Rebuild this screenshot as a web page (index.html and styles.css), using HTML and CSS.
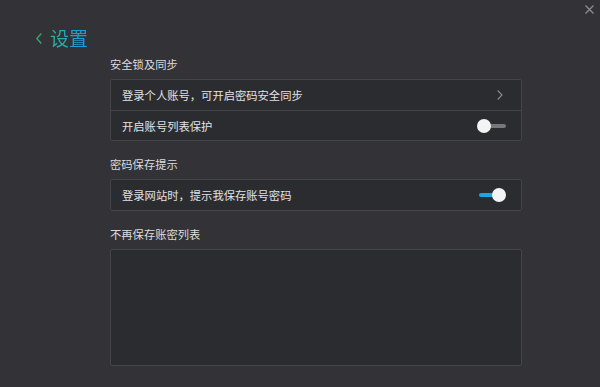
FILE: index.html
```html
<!DOCTYPE html>
<html lang="zh-CN">
<head>
    <meta charset="UTF-8">
    <title>设置</title>
    <link rel="stylesheet" href="styles.css">
</head>
<body>
    <!-- 关闭按钮 -->
    <span class="close-btn">
        <svg width="9" height="9" viewBox="0 0 9 9"><path d="M0.5 0.5 L8.5 8.5 M8.5 0.5 L0.5 8.5" stroke="#8c8c91" stroke-width="1.3" fill="none"/></svg>
    </span>

    <div class="page">
        <!-- 标题 -->
        <div class="header">
            <svg class="back" width="6" height="11" viewBox="0 0 6 11"><polyline points="5.3,0.5 0.8,5.5 5.3,10.5" stroke="#3aa878" stroke-width="1.3" fill="none"/></svg>
            <span class="title">设置</span>
        </div>

        <div class="content">
            <div class="section-label">安全锁及同步</div>
            <div class="panel">
                <div class="row">
                    <span>登录个人账号，可开启密码安全同步</span>
                    <svg class="arrow" width="6" height="10" viewBox="0 0 6 10"><polyline points="0.7,0.5 5,5 0.7,9.5" stroke="#8a8a8f" stroke-width="1.1" fill="none"/></svg>
                </div>
                <div class="row">
                    <span>开启账号列表保护</span>
                    <span class="toggle"><span class="track"></span><span class="knob"></span></span>
                </div>
            </div>

            <div class="section-label">密码保存提示</div>
            <div class="panel">
                <div class="row">
                    <span>登录网站时，提示我保存账号密码</span>
                    <span class="toggle on"><span class="track"></span><span class="knob"></span></span>
                </div>
            </div>

            <div class="section-label">不再保存账密列表</div>
            <div class="panel list-box"></div>
        </div>
    </div>
</body>
</html>
```

FILE: styles.css
```css
/* 基础 */
body {
    margin: 0;
    padding: 0;
    background: #333237;
    font-family: "Noto Sans CJK SC", "Noto Sans", sans-serif;
    color: #e2e2e4;
    overflow: hidden;
}

.close-btn {
    position: absolute;
    top: 5px;
    right: 6px;
    width: 9px;
    height: 9px;
    display: block;
    line-height: 0;
}

.page {
    padding-top: 28px;
}

/* 标题 */
.header {
    display: flex;
    align-items: center;
    height: 20px;
    padding-left: 36px;
}

.back {
    margin-right: 8px;
}

.title {
    font-size: 19px;
    line-height: 20px;
    background: linear-gradient(90deg, #2ab59a, #1b97e4);
    -webkit-background-clip: text;
    background-clip: text;
    color: transparent;
}

/* 内容 */
.content {
    margin-left: 110px;
    width: 412px;
    padding-top: 6px;
}

.section-label {
    font-size: 11.3px;
    line-height: 20px;
    height: 20px;
    color: #dcdcde;
    margin-bottom: 5px;
}

.panel {
    background: #2b2c30;
    border: 1px solid #444549;
    border-radius: 2px;
    margin-bottom: 13px;
}

.row {
    display: flex;
    align-items: center;
    justify-content: space-between;
    height: 30px;
    padding: 0 15px 0 11px;
    font-size: 11.3px;
}

.row + .row {
    height: 29px;
    border-top: 1px solid #444549;
}

.arrow {
    margin-right: 3px;
}

/* 开关 */
.toggle {
    position: relative;
    width: 29px;
    height: 14px;
    display: block;
}

.toggle .track {
    position: absolute;
    left: 7px;
    right: 0;
    top: 5px;
    height: 4px;
    border-radius: 2px;
    background: #77787c;
}

.toggle .knob {
    position: absolute;
    left: 0;
    top: 0;
    width: 14px;
    height: 14px;
    border-radius: 50%;
    background: #f4f4f5;
}

.toggle.on .track {
    left: 2px;
    right: 7px;
    background: #1aa6e2;
}

.toggle.on .knob {
    left: auto;
    right: 0;
}

.list-box {
    height: 115px;
}
```
